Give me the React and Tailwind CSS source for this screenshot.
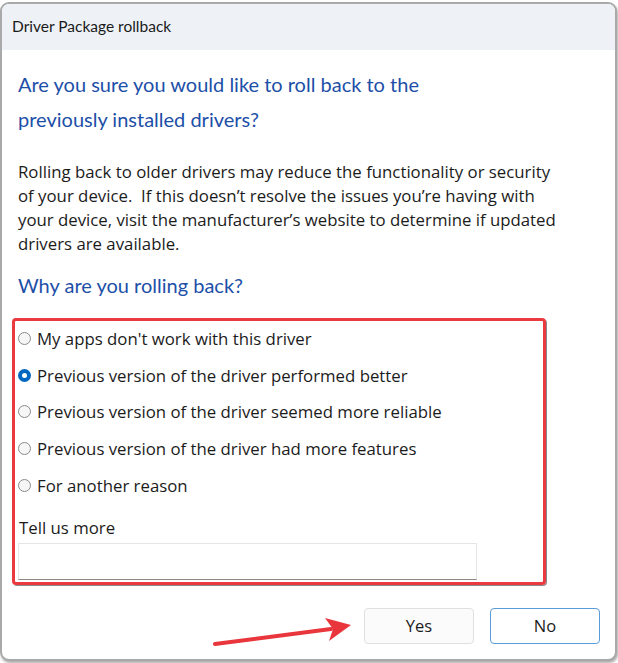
import React, { useState } from "react";

const reasons = [
    "My apps don't work with this driver",
    "Previous version of the driver performed better",
    "Previous version of the driver seemed more reliable",
    "Previous version of the driver had more features",
    "For another reason",
];

function Radio({ checked }) {
    if (checked) {
        return <span className="w-[13px] h-[13px] rounded-full bg-[#0067c0] flex items-center justify-center shrink-0">
            <span className="w-[5px] h-[5px] rounded-full bg-white"></span>
        </span>
    }
    return <span className="w-[13px] h-[13px] rounded-full border border-[#8a8a8a] bg-[#f6f6f6] shrink-0"></span>
}

export default function App() {
    const [selected, setSelected] = useState(1)

    return <div className="w-[618px] h-[663px] bg-white pt-[2px] font-['Open_Sans',sans-serif] text-[#1b1b1b]">
        <div className="relative w-[617px] h-[659px] border-2 border-[#a9a9a9] rounded-[9px] overflow-hidden bg-white shadow-[1px_2px_3px_rgba(0,0,0,0.35)]">
            <div className="h-[46px] bg-[#eef2f7] pl-[10px] flex items-center text-[15.5px] text-[#1a1a1a] font-['Lato',sans-serif]">
                Driver Package rollback
            </div>

            <div className="pl-[16px] pr-[10px]">
                <h1 className="mt-[17px] text-[20px] leading-[35px] text-[#1d4fa8] font-['Lato',sans-serif]">
                    Are you sure you would like to roll back to the<br />previously installed drivers?
                </h1>

                <p className="mt-[23px] text-[16.8px] leading-[24px] whitespace-nowrap">
                    Rolling back to older drivers may reduce the functionality or security<br />
                    of your device.&nbsp; If this doesn’t resolve the issues you’re having with<br />
                    your device, visit the manufacturer’s website to determine if updated<br />
                    drivers are available.
                </p>

                <h2 className="mt-[12px] text-[20px] leading-[35px] text-[#1d4fa8] font-['Lato',sans-serif]">
                    Why are you rolling back?
                </h2>

                <div className="-ml-[6px] mt-[15px] w-[534px] h-[267px] border-[3px] border-[#ea3a3f] rounded-[4px] shadow-[1px_1px_0_#8a8a8a] pl-[3px]">
                    <div className="flex flex-col -mt-[1px]">
                        {reasons.map((r, idx) => (
                            <label key={idx} onClick={() => setSelected(idx)} className="h-[36.75px] flex items-center gap-[6px] text-[16.8px]">
                                <Radio checked={selected === idx} />
                                {r}
                            </label>
                        ))}
                    </div>
                    <div className="mt-[14px] text-[16.8px] leading-[20px] pl-[1px]">Tell us more</div>
                    <input className="mt-[5px] w-[459px] h-[37px] border border-[#e6e6e6] border-b-[#8a8a8a] outline-none" type="text" />
                </div>
            </div>

            <div className="flex justify-end gap-[16px] pr-[15px] mt-[23px]">
                <button className="w-[110px] h-[36px] rounded-[4px] bg-[#fbfbfb] border border-[#e0e0e0] text-[16.5px]">Yes</button>
                <button className="w-[110px] h-[36px] rounded-[4px] bg-white border border-[#5a9bd8] text-[16.5px]">No</button>
            </div>

            <svg className="absolute left-[211px] top-[612px]" width="142" height="32" viewBox="0 0 142 32">
                <path d="M2 28 L118 13" stroke="#e8363c" strokeWidth="4" strokeLinecap="round" />
                <path d="M138 9 L112 2 L120 13 L116 25 Z" fill="#e8363c" />
            </svg>
        </div>
    </div>
}
